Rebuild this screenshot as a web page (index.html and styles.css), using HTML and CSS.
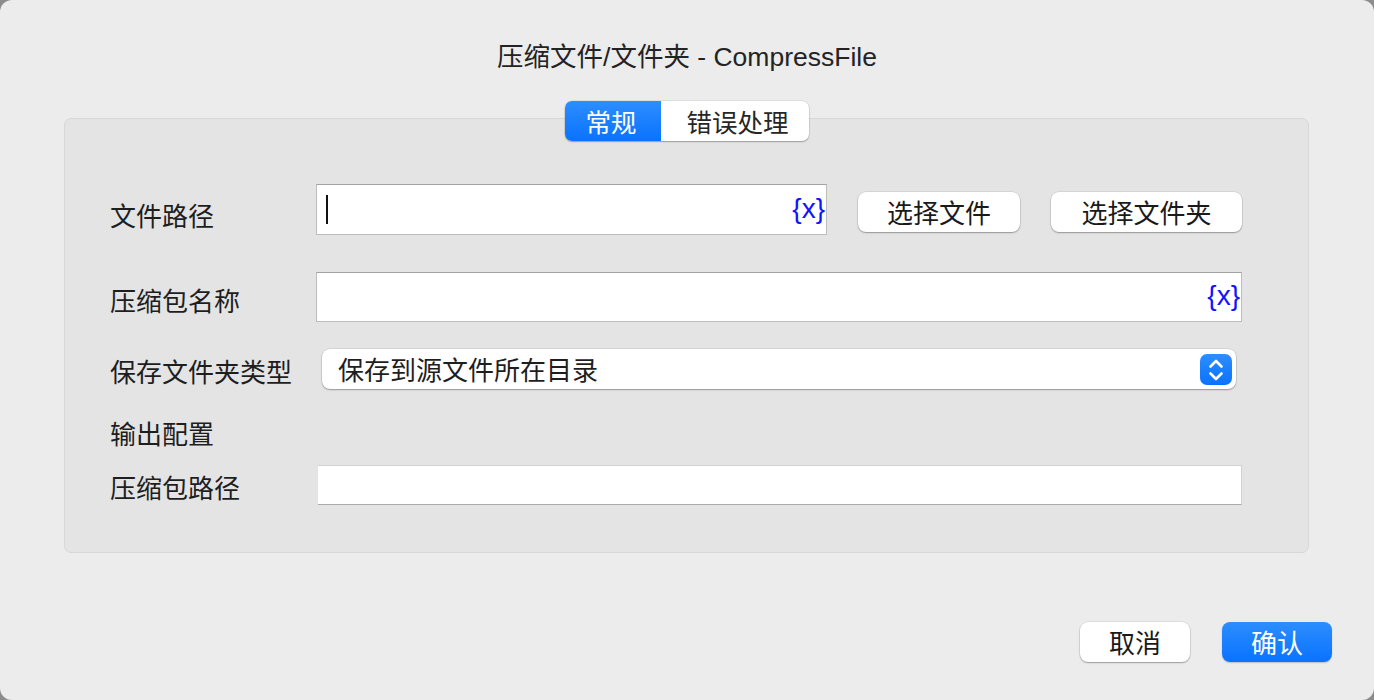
FILE: index.html
```html
<!DOCTYPE html>
<html lang="zh-CN">
<head>
<meta charset="utf-8">
<title>压缩文件/文件夹 - CompressFile</title>
<link rel="stylesheet" href="styles.css">
</head>
<body>
<div class="window">
  <div class="title">压缩文件/文件夹 - CompressFile</div>
  <div class="tabs">
    <div class="tab active">常规</div>
    <div class="tab">错误处理</div>
  </div>
  <div class="panel">
    <div class="row row1">
      <div class="label l1">文件路径</div>
      <div class="field f1"><span class="caret"></span><span class="var">{x}</span></div>
      <div class="btn b1">选择文件</div>
      <div class="btn b2">选择文件夹</div>
    </div>
    <div class="row row2">
      <div class="label l2">压缩包名称</div>
      <div class="field f2"><span class="var">{x}</span></div>
    </div>
    <div class="row row3">
      <div class="label l3">保存文件夹类型</div>
      <div class="select">
        <span class="select-text">保存到源文件所在目录</span>
        <span class="stepper">
          <svg width="32" height="31" viewBox="0 0 32 31"><polyline points="10.5,12.5 16,7 21.5,12.5" fill="none" stroke="#fff" stroke-width="2.6" stroke-linecap="round" stroke-linejoin="round"/><polyline points="10.5,19.5 16,25 21.5,19.5" fill="none" stroke="#fff" stroke-width="2.6" stroke-linecap="round" stroke-linejoin="round"/></svg>
        </span>
      </div>
    </div>
    <div class="row row4">
      <div class="label">输出配置</div>
    </div>
    <div class="row row5">
      <div class="label l5">压缩包路径</div>
      <div class="field f5"></div>
    </div>
  </div>
  <div class="footer">
    <div class="btn cancel">取消</div>
    <div class="btn primary">确认</div>
  </div>
</div>
</body>
</html>
```
FILE: styles.css
```css
html, body {
  margin: 0;
  padding: 0;
  background: #8c8c8c;
}
body {
  width: 1374px;
  height: 700px;
  overflow: hidden;
  font-family: "Liberation Sans", "Noto Sans CJK SC", sans-serif;
  color: #1e1e1e;
}
.window {
  width: 1374px;
  height: 700px;
  background: #ececec;
  border-radius: 12px;
  display: flex;
  flex-direction: column;
  box-sizing: border-box;
}
.title {
  margin-top: 42px;
  height: 30px;
  line-height: 30px;
  font-size: 26.5px;
  text-align: center;
  color: #232323;
}
.tabs {
  position: relative;
  z-index: 2;
  align-self: center;
  margin-top: 29px;
  height: 40px;
  display: flex;
  background: #fff;
  border-radius: 7px;
  box-shadow: 0 1px 1.5px rgba(0,0,0,0.28), 0 0 0 0.5px rgba(0,0,0,0.12);
}
.tab {
  height: 40px;
  line-height: 40px;
  font-size: 25.5px;
  font-family: "Noto Sans CJK SC", sans-serif;
  padding: 0 20px 0 25px;
  color: #262626;
}
.tab.active {
  width: 96px;
  box-sizing: border-box;
  padding: 0 0 0 20px;
  color: #fff;
  border-radius: 7px 0 0 7px;
  background: linear-gradient(#2c8eff, #0a72ff);
}
.panel {
  margin: -23px 65px 0 64px;
  height: 435px;
  box-sizing: border-box;
  background: #e4e4e4;
  border: 1px solid #d8d8d8;
  border-radius: 7px;
  padding: 65px 0 0 45px;
  display: flex;
  flex-direction: column;
}
.row {
  display: flex;
  align-items: center;
}
.label {
  width: 206px;
  flex: none;
  font-size: 26px;
  line-height: 30px;
  font-family: "Noto Sans CJK SC", sans-serif;
  color: #1e1e1e;
}
.row1 { height: 51px; }
.row2 { height: 50px; margin-top: 37px; }
.row3 { height: 40px; margin-top: 27px; }
.row4 { height: 30px; margin-top: 29px; }
.row5 { height: 40px; margin-top: 17px; }
.l1 { margin-top: 10px; }
.l2 { margin-top: 5px; }
.l3 { margin-top: 3px; }
.l5 { margin-top: 3px; }
.field {
  box-sizing: border-box;
  background: #fff;
  border: 1px solid #bdbdbd;
  border-top-color: #a2a2a2;
  display: flex;
  align-items: center;
}
.f1 {
  width: 511px;
  height: 51px;
  padding: 0 1px 0 9px;
}
.f2 {
  width: 926px;
  height: 50px;
  padding: 0 1px 0 9px;
  justify-content: flex-end;
}
.caret {
  width: 2px;
  height: 29px;
  background: #111;
}
.var {
  margin-left: auto;
  color: #0f14ff;
  font-size: 28px;
  line-height: 30px;
  margin-top: -2px;
}
.btn {
  box-sizing: border-box;
  height: 40px;
  line-height: 40px;
  text-align: center;
  background: #fff;
  border-radius: 8px;
  font-size: 26px;
  font-family: "Noto Sans CJK SC", sans-serif;
  color: #1a1a1a;
  box-shadow: 0 1px 1.5px rgba(0,0,0,0.3), 0 0 0 0.5px rgba(0,0,0,0.12);
}
.b1 {
  width: 162px;
  margin-left: 31px;
  margin-top: 5px;
}
.b2 {
  width: 191px;
  margin-left: 31px;
  margin-top: 5px;
}
.select {
  margin-left: 6px;
  width: 914px;
  height: 40px;
  box-sizing: border-box;
  background: #fff;
  border-radius: 8px;
  box-shadow: 0 1px 1.5px rgba(0,0,0,0.3), 0 0 0 0.5px rgba(0,0,0,0.12);
  display: flex;
  align-items: center;
  padding: 0 4px 0 16px;
}
.select-text {
  font-size: 26px;
  line-height: 30px;
  font-family: "Noto Sans CJK SC", sans-serif;
  color: #1e1e1e;
}
.stepper {
  margin-left: auto;
  width: 32px;
  height: 31px;
  border-radius: 7px;
  background: linear-gradient(#2c8eff, #0a72ff);
  display: flex;
}
.f5 {
  margin-left: 2px;
  width: 924px;
  height: 40px;
  border: none;
  border-top: 1px solid #d2d2d2;
  border-right: 1px solid #d2d2d2;
  border-bottom: 1px solid #ababab;
}
.footer {
  margin-top: 69px;
  display: flex;
  justify-content: flex-end;
  padding-right: 42px;
  gap: 32px;
}
.cancel, .primary {
  width: 110px;
}
.primary {
  color: #fff;
  background: linear-gradient(#2c8eff, #0a72ff);
  box-shadow: 0 1px 1.5px rgba(0,0,0,0.2);
}
```
